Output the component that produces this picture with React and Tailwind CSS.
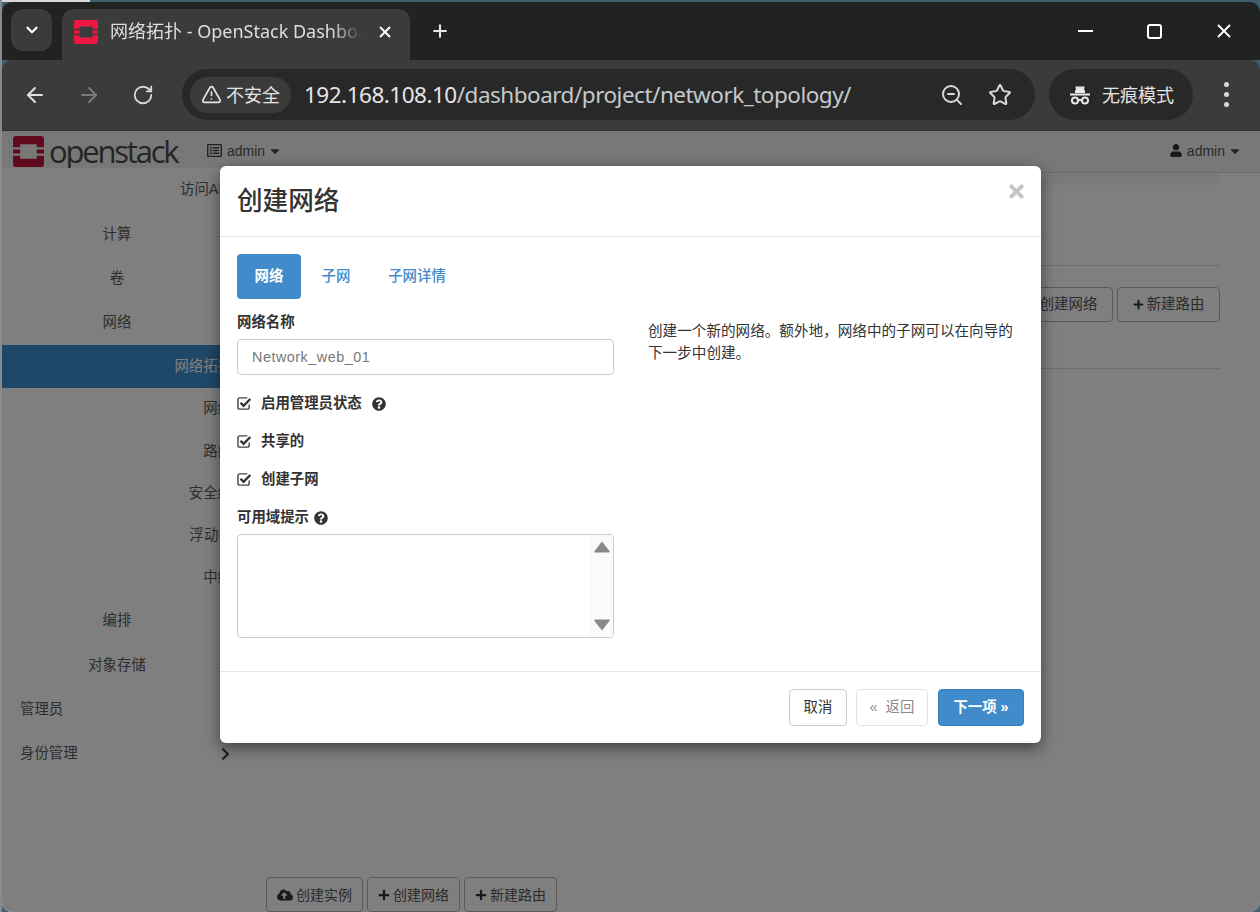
import { ChevronDown, X, Plus, ArrowLeft, ArrowRight, RotateCw, ZoomOut, Star, TriangleAlert } from 'lucide-react';
import { FaQuestionCircle, FaTimes, FaCloudUploadAlt, FaPlus, FaUser, FaChevronRight, FaCaretDown, FaRegListAlt } from 'react-icons/fa';

const cjk = "font-['Liberation_Sans','Noto_Sans_CJK_SC',sans-serif]";

function StackLogo({ className, color }) {
  return (
    <svg viewBox="0 0 30 30" className={className} fill={color}>
      <path fillRule="evenodd" d="M3 0h24a3 3 0 0 1 3 3v8h-7V8H7v3H0V3a3 3 0 0 1 3-3ZM0 13h7v4H0ZM23 13h7v4h-7ZM0 19h7v3h16v-3h7v8a3 3 0 0 1-3 3H3a3 3 0 0 1-3-3Z" />
    </svg>
  );
}

function Incognito() {
  return (
    <svg viewBox="0 0 24 24" className="w-6 h-6" fill="none" stroke="#e8e8e8" strokeWidth="2">
      <path d="M7 10l1.5-6h7L17 10" fill="#e8e8e8" stroke="none" />
      <path d="M7.5 4.5h9M7 8h10" />
      <path d="M2 11.5h20" />
      <circle cx="7" cy="17.5" r="3" />
      <circle cx="17" cy="17.5" r="3" />
      <path d="M10 17h4" />
    </svg>
  );
}

function CheckBoxIcon() {
  return (
    <svg viewBox="0 0 16 16" className="w-[15px] h-[15px] mr-[9px] shrink-0" fill="none">
      <path d="M13 9v3a2 2 0 0 1-2 2H3a2 2 0 0 1-2-2V4a2 2 0 0 1 2-2h8" stroke="#444" strokeWidth="1.5" />
      <path d="M3.8 7.2 7 10.4 14.2 3.2" stroke="#333" strokeWidth="2.6" />
    </svg>
  );
}

function SideItem({ label, align = 'center', active, chevron, sub }) {
  const pos = align === 'center' ? 'justify-center' : align === 'right' ? 'justify-end' : 'justify-start pl-[18px]';
  const height = active ? 'h-[43px]' : sub ? 'h-[42.2px]' : 'h-[44.3px]';
  return (
    <div className={`relative flex items-center text-[14.4px] whitespace-nowrap ${height} ${pos} ${active ? 'bg-[#3e8ecf] text-white' : 'text-[#5c5c5c]'}`}>
      {label}
      {chevron}
    </div>
  );
}

function PageButton({ icon, label, className = '' }) {
  return (
    <button className={`h-[35px] flex items-center justify-center gap-[3px] border border-[#b4b4b4] rounded-[4px] text-[#555] bg-white ${className}`}>
      {icon}
      {label}
    </button>
  );
}

function CheckRow({ label, help, className = '' }) {
  return (
    <div className={`flex items-center text-[14.4px] font-bold text-[#333] ${className}`}>
      <CheckBoxIcon />
      {label}
      {help && <FaQuestionCircle className="w-[14px] h-[14px] text-[#333] ml-[10px]" />}
    </div>
  );
}

export default function App() {
  return (
    <div className={`relative w-[1260px] h-[912px] overflow-hidden bg-[#3f5f6e] ${cjk}`}>
      <div className="absolute left-0 top-0 w-[90px] h-[2px] bg-[#d8d8d8]" />
      <div className="absolute left-0 top-0 w-[2px] h-full bg-[#8a8a8a]" />
      <div className="ml-[2px] mt-[2px] h-[910px] flex flex-col rounded-[10px] overflow-hidden">
        {/* Title bar */}
        <div className="h-[58px] shrink-0 bg-[#202322] flex items-start pt-[7px] pl-[9px]">
          <div className="w-[41px] h-[42px] bg-[#3b3b3b] rounded-[12px] flex items-center justify-center">
            <ChevronDown className="w-[18px] h-[18px] text-white" strokeWidth={3} />
          </div>
          <div className="ml-[10px] w-[348px] h-[51px] bg-[#3b3b3b] rounded-t-[12px] flex items-center pl-[12px] pb-[6px]">
            <StackLogo className="w-[24px] h-[24px] shrink-0" color="#ed1944" />
            <span className="ml-[12px] w-[252px] overflow-hidden whitespace-nowrap text-[18px] text-[#dedede] font-['Noto_Sans','Noto_Sans_CJK_SC',sans-serif] [mask-image:linear-gradient(90deg,black_88%,transparent)]">网络拓扑 - OpenStack Dashboard</span>
            <X className="ml-[14px] w-[18px] h-[18px] text-white" strokeWidth={2.5} />
          </div>
          <Plus className="ml-[20px] mt-[12px] w-[20px] h-[20px] text-[#e8e8e8]" strokeWidth={2.5} />
          <div className="ml-auto flex items-center h-[44px]">
            <div className="w-[15px] h-[2px] bg-white mr-[54px]" />
            <div className="w-[15px] h-[15px] border-2 border-white rounded-[3px] mr-[51px]" />
            <X className="w-[22px] h-[22px] text-white mr-[25px]" strokeWidth={2} />
          </div>
        </div>

        {/* Toolbar */}
        <div className="h-[71px] shrink-0 bg-[#3b3b3b] border-b border-[#333] rounded-t-[10px] flex items-center pb-[1px]">
          <ArrowLeft className="ml-[21px] w-[24px] h-[24px] text-[#e0e0e0]" strokeWidth={2} />
          <ArrowRight className="ml-[30px] w-[24px] h-[24px] text-[#7a7a7a]" strokeWidth={2} />
          <RotateCw className="ml-[31px] w-[22px] h-[22px] text-[#d8d8d8]" strokeWidth={2} />
          <div className="ml-[28px] w-[853px] h-[51px] bg-[#282828] rounded-full flex items-center pl-[8px]">
            <div className="w-[101px] h-[36px] bg-[#3b3b3b] rounded-full flex items-center justify-center gap-[4px] text-[18px] text-[#e4e4e4]">
              <TriangleAlert className="w-[21px] h-[21px]" strokeWidth={1.8} />
              <span className="pt-[3px]">不安全</span>
            </div>
            <span className="ml-[13px] text-[22.5px] tracking-[-0.5px] text-[#e6e6e6] font-['Noto_Sans',sans-serif] whitespace-nowrap">192.168.108.10<span className="text-[#c4c9cc]">/dashboard/project/network_topology/</span></span>
            <ZoomOut className="ml-auto w-[24px] h-[24px] text-[#d8d8d8]" strokeWidth={2} />
            <Star className="ml-[24px] mr-[23px] w-[24px] h-[24px] text-[#d8d8d8]" strokeWidth={2} />
          </div>
          <div className="ml-[14px] w-[144px] h-[51px] bg-[#282828] rounded-full flex items-center justify-center gap-[10px] text-[18px] text-[#e4e4e4]">
            <Incognito />
            <span className="pt-[3px]">无痕模式</span>
          </div>
          <div className="ml-[31px] flex flex-col gap-[5px]">
            <div className="w-[5px] h-[5px] rounded-full bg-[#d8d8d8]" />
            <div className="w-[5px] h-[5px] rounded-full bg-[#d8d8d8]" />
            <div className="w-[5px] h-[5px] rounded-full bg-[#d8d8d8]" />
          </div>
        </div>

        {/* Dashboard page */}
        <div className="flex-1 min-h-0 flex flex-col bg-white">
          <div className="h-[42px] shrink-0 bg-[#f0f0f0] border-b border-[#d8d8d8] flex items-center pl-[11px] pr-[18px] text-sm text-[#555]">
            <StackLogo className="w-[31px] h-[31px]" color="#c0143a" />
            <span className="ml-[5px] text-[31px] leading-none tracking-[-2.2px] text-[#4a4a4a] font-['Open_Sans',sans-serif]">openstack</span>
            <span className="text-[9px] self-end mb-[9px] text-[#5a5a5a]">.</span>
            <FaRegListAlt className="ml-[27px] mb-[2px] w-[15px] h-[15px] text-[#444]" />
            <span className="ml-[5px] mb-[2px]">admin</span>
            <FaCaretDown className="ml-[3px] mb-[2px] w-[14px] h-[14px] text-[#444]" />
            <FaUser className="ml-auto mb-[2px] w-[12px] h-[13px] text-[#333]" />
            <span className="ml-[5px] mb-[2px]">admin</span>
            <FaCaretDown className="ml-[3px] mb-[2px] w-[14px] h-[14px] text-[#444]" />
          </div>
          <div className="flex-1 min-h-0 flex">
            <div className="w-[230px] shrink-0 bg-[#fefefe] -mt-[5px]">
              <SideItem label="访问API" align="right" />
              <SideItem label="计算" />
              <SideItem label="卷" />
              <SideItem label="网络" chevron={<FaChevronRight className="absolute right-[2px] w-[10px] h-[10px] text-[#555]" />} />
              <SideItem label="网络拓扑" align="right" active sub />
              <SideItem label="网络" align="right" sub />
              <SideItem label="路由" align="right" sub />
              <SideItem label="安全组" align="right" sub />
              <SideItem label="浮动IP" align="right" sub />
              <SideItem label="中继" align="right" sub />
              <SideItem label="编排" />
              <SideItem label="对象存储" />
              <SideItem label="管理员" align="left" />
              <SideItem label="身份管理" align="left" chevron={<FaChevronRight className="absolute right-[1px] w-[11px] h-[14px] text-[#444]" />} />
            </div>
            <div className="flex-1 min-w-0 flex flex-col pr-[40px]">
              <div className="h-[12px] shrink-0 bg-[#f5f5f5] rounded-b-[4px]" />
              <div className="h-[81px] shrink-0 border-b border-[#d8d8d8]" />
              <div className="h-[103px] shrink-0 border-b border-[#d8d8d8] pt-[21px] flex justify-end gap-[4px]">
                <PageButton icon={<FaPlus className="w-[11px] h-[11px] text-[#333]" />} label="创建网络" className="w-[103px] text-[14.4px]" />
                <PageButton icon={<FaPlus className="w-[11px] h-[11px] text-[#333]" />} label="新建路由" className="w-[103px] text-[14.4px]" />
              </div>
              <div className="pl-[34px] pt-[508px] flex gap-[4px]">
                <PageButton icon={<FaCloudUploadAlt className="w-[16px] h-[16px] text-[#333]" />} label="创建实例" className="w-[97px] text-sm" />
                <PageButton icon={<FaPlus className="w-[12px] h-[12px] text-[#333]" />} label="创建网络" className="w-[93px] text-sm" />
                <PageButton icon={<FaPlus className="w-[12px] h-[12px] text-[#333]" />} label="新建路由" className="w-[93px] text-sm" />
              </div>
            </div>
          </div>
        </div>
      </div>

      {/* Backdrop over the page only */}
      <div className="absolute left-[2px] right-0 top-[131px] bottom-0 bg-black/50 rounded-b-[10px]" />

      {/* Modal */}
      <div className="absolute left-[220px] top-[166px] w-[821px] h-[577px] bg-white rounded-[6px] shadow-[0_5px_15px_rgba(0,0,0,0.5)] flex flex-col">
        <div className="h-[71px] shrink-0 border-b border-[#e5e5e5] flex items-center justify-between pl-[17px] pr-[16px]">
          <h4 className="text-[25.6px] text-[#333] font-medium">创建网络</h4>
          <FaTimes className="w-[17px] h-[21px] text-[#c4c4c4] mb-[20px]" />
        </div>
        <div className="flex-1 min-h-0 pt-[17px] px-[17px]">
          <div className="flex items-center h-[45px] text-[14.4px] font-medium">
            <div className="w-[64px] h-full bg-[#428bca] text-white font-bold rounded-[4px] flex items-center justify-center">网络</div>
            <div className="w-[70px] text-center text-[#428bca]">子网</div>
            <div className="w-[92px] text-center text-[#428bca]">子网详情</div>
          </div>
          <div className="flex">
            <div className="w-[377px] shrink-0">
              <div className="mt-[14px] text-[14.4px] font-bold text-[#333] leading-[18px]">网络名称</div>
              <div className="mt-[8px] h-[36px] border border-[#ccc] rounded-[4px] flex items-center pl-[14px] pt-[2px] text-[14.4px] text-[#777] tracking-[0.5px]">Network_web_01</div>
              <CheckRow label="启用管理员状态" help className="mt-[19px] h-[19px]" />
              <CheckRow label="共享的" className="mt-[19px] h-[19px]" />
              <CheckRow label="创建子网" className="mt-[19px] h-[19px]" />
              <div className="mt-[20px] h-[18px] flex items-center text-[14.4px] font-bold text-[#333]">
                可用域提示
                <FaQuestionCircle className="ml-[5px] w-[14px] h-[14px] text-[#333]" />
              </div>
              <div className="mt-[7px] h-[104px] border border-[#ccc] rounded-[4px] flex justify-end overflow-hidden">
                <div className="w-[23px] bg-[#fafafa] flex flex-col items-center justify-between py-[6px]">
                  <svg viewBox="0 0 16 12" className="w-[16px] h-[12px]" fill="#888"><path d="M8 0.5 15.5 10a1 1 0 0 1-.8 1.5H1.3A1 1 0 0 1 .5 10Z" /></svg>
                  <svg viewBox="0 0 16 12" className="w-[16px] h-[12px]" fill="#888"><path d="M8 11.5 15.5 2a1 1 0 0 0-.8-1.5H1.3A1 1 0 0 0 .5 2Z" /></svg>
                </div>
              </div>
            </div>
            <p className="ml-[34px] mt-[21px] w-[372px] text-[14.6px] leading-[22px] text-[#333]">创建一个新的网络。额外地，网络中的子网可以在向导的下一步中创建。</p>
          </div>
        </div>
        <div className="h-[72px] shrink-0 border-t border-[#e5e5e5] flex justify-end items-start pt-[17px] pr-[17px] text-[14.4px]">
          <button className="w-[58px] h-[37px] border border-[#ccc] rounded-[4px] text-[#333]">取消</button>
          <button className="ml-[9px] w-[72px] h-[37px] border border-[#e4e4e4] rounded-[4px] text-[#8c8c8c]">«&nbsp; 返回</button>
          <button className="ml-[10px] w-[86px] h-[37px] bg-[#428bca] border border-[#357ebd] rounded-[4px] text-white font-bold">下一项 »</button>
        </div>
      </div>
    </div>
  );
}
